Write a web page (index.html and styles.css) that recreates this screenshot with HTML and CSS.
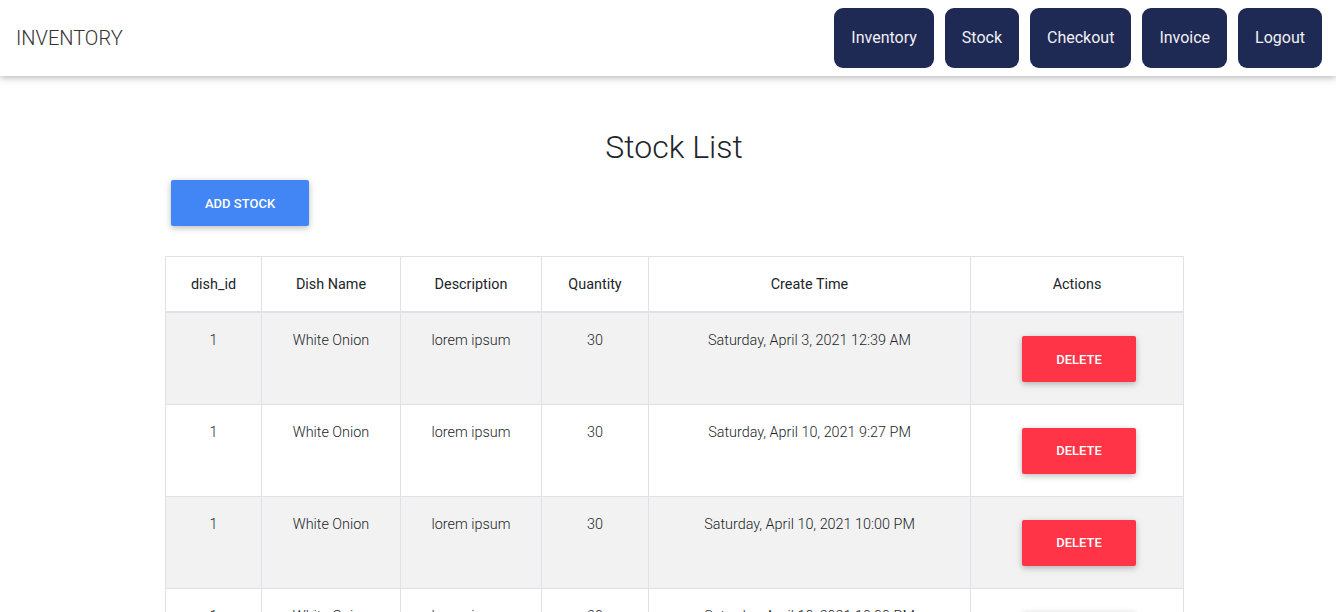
FILE: index.html
```html
<!DOCTYPE html>
<html lang="en">
<head>
<meta charset="utf-8">
<title>Stock List</title>
<link rel="stylesheet" href="styles.css">
</head>
<body>
<header class="navbar">
  <div class="brand">INVENTORY</div>
  <nav class="nav">
    <a class="nav-btn" href="#">Inventory</a>
    <a class="nav-btn" href="#">Stock</a>
    <a class="nav-btn" href="#">Checkout</a>
    <a class="nav-btn" href="#">Invoice</a>
    <a class="nav-btn" href="#">Logout</a>
  </nav>
</header>
<main class="container">
  <h2 class="title">Stock List</h2>
  <div class="toolbar"><button class="btn btn-primary">Add Stock</button></div>
  <table class="table">
    <colgroup>
      <col class="c1"><col class="c2"><col class="c3"><col class="c4"><col class="c5"><col class="c6">
    </colgroup>
    <thead>
      <tr><th>dish_id</th><th>Dish Name</th><th>Description</th><th>Quantity</th><th>Create Time</th><th>Actions</th></tr>
    </thead>
    <tbody>
      <tr><td>1</td><td>White Onion</td><td>lorem ipsum</td><td>30</td><td>Saturday, April 3, 2021 12:39 AM</td><td><button class="btn btn-danger">Delete</button></td></tr>
      <tr><td>1</td><td>White Onion</td><td>lorem ipsum</td><td>30</td><td>Saturday, April 10, 2021 9:27 PM</td><td><button class="btn btn-danger">Delete</button></td></tr>
      <tr><td>1</td><td>White Onion</td><td>lorem ipsum</td><td>30</td><td>Saturday, April 10, 2021 10:00 PM</td><td><button class="btn btn-danger">Delete</button></td></tr>
      <tr><td>1</td><td>White Onion</td><td>lorem ipsum</td><td>30</td><td>Saturday, April 10, 2021 10:00 PM</td><td><button class="btn btn-danger">Delete</button></td></tr>
    </tbody>
  </table>
</main>
</body>
</html>
```
FILE: styles.css
```css
* { box-sizing: border-box; }
html, body { margin: 0; padding: 0; }
body {
  font-family: Roboto, "Liberation Sans", sans-serif;
  color: #212529;
  background: #fff;
  font-weight: 300;
}
.navbar {
  height: 76px;
  display: flex;
  align-items: center;
  justify-content: space-between;
  padding: 0 14px 0 16px;
  background: #fff;
  box-shadow: 0 2px 5px 0 rgba(0,0,0,.16), 0 2px 10px 0 rgba(0,0,0,.12);
}
.brand {
  font-size: 20px;
  font-weight: 300;
  color: #333;
}
.nav {
  display: flex;
  gap: 11px;
  margin-top: -1px;
}
.nav-btn {
  height: 60px;
  display: flex;
  align-items: center;
  padding: 0 17px;
  background: #1f2a54;
  color: #f0f0f4;
  font-size: 16px;
  font-weight: 400;
  text-decoration: none;
  border-radius: 9px;
}
.container {
  width: 1018px;
  margin: 0 auto;
  padding-left: 12px;
  box-sizing: content-box;
}
.title {
  margin: 52px 0 8px;
  text-align: center;
  font-size: 32px;
  line-height: 38px;
  font-weight: 300;
  color: #212529;
}
.toolbar { margin-bottom: 24px; }
.btn {
  border: 0;
  border-radius: 2px;
  margin: 6px;
  padding: 13.5px 34px;
  font-family: Roboto, "Liberation Sans", sans-serif;
  font-size: 13px;
  line-height: 19px;
  font-weight: 500;
  text-transform: uppercase;
  color: #fff;
  box-shadow: 0 2px 5px 0 rgba(0,0,0,.16), 0 2px 10px 0 rgba(0,0,0,.12);
  cursor: pointer;
}
.btn-primary { background: #4285f4; }
.btn-danger { background: #ff3547; }
.table {
  width: 1018px;
  border-collapse: collapse;
  table-layout: fixed;
}
.c1 { width: 96px; }
.c2 { width: 139px; }
.c3 { width: 141px; }
.c4 { width: 107px; }
.c5 { width: 322px; }
.c6 { width: 213px; }
.table th, .table td {
  border: 1px solid #dee2e6;
  text-align: center;
  vertical-align: top;
  padding: 17px 16px 16px;
  font-size: 14.4px;
  line-height: 22px;
}
.table th {
  font-weight: 400;
  padding: 17px 16px 15px;
  border-bottom-width: 2px;
}
.table td {
  font-weight: 300;
  height: 92px;
}
.table td:last-child { padding: 17px 14px 0 18px; }
.table tbody tr:nth-child(odd) { background: #f2f2f2; }
```
